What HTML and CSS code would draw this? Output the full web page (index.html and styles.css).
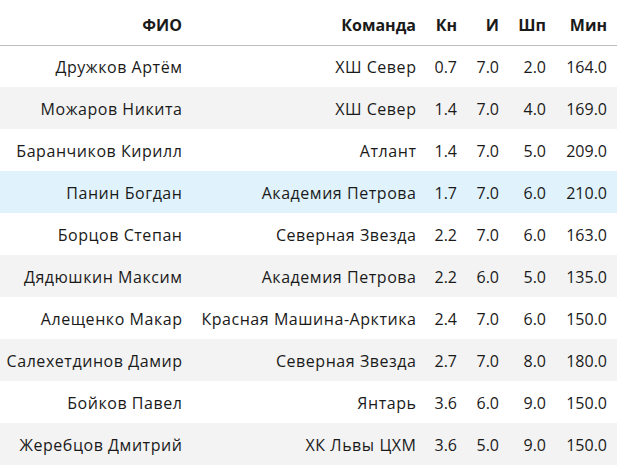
FILE: index.html
```html
<!DOCTYPE html>
<html lang="ru">
<head>
<meta charset="utf-8">
<title>Таблица</title>
<link rel="stylesheet" href="styles.css">
</head>
<body>
<table class="data">
  <colgroup>
    <col class="c-name">
    <col class="c-team">
    <col class="c-kn">
    <col class="c-i">
    <col class="c-shp">
    <col class="c-min">
  </colgroup>
  <thead>
    <tr><th>ФИО</th><th>Команда</th><th>Кн</th><th>И</th><th>Шп</th><th>Мин</th></tr>
  </thead>
  <tbody>
    <tr><td class="txt">Дружков Артём</td><td class="txt">ХШ Север</td><td>0.7</td><td>7.0</td><td>2.0</td><td>164.0</td></tr>
    <tr><td class="txt">Можаров Никита</td><td class="txt">ХШ Север</td><td>1.4</td><td>7.0</td><td>4.0</td><td>169.0</td></tr>
    <tr><td class="txt">Баранчиков Кирилл</td><td class="txt">Атлант</td><td>1.4</td><td>7.0</td><td>5.0</td><td>209.0</td></tr>
    <tr class="hover"><td class="txt">Панин Богдан</td><td class="txt">Академия Петрова</td><td>1.7</td><td>7.0</td><td>6.0</td><td>210.0</td></tr>
    <tr><td class="txt">Борцов Степан</td><td class="txt">Северная Звезда</td><td>2.2</td><td>7.0</td><td>6.0</td><td>163.0</td></tr>
    <tr><td class="txt">Дядюшкин Максим</td><td class="txt">Академия Петрова</td><td>2.2</td><td>6.0</td><td>5.0</td><td>135.0</td></tr>
    <tr><td class="txt">Алещенко Макар</td><td class="txt">Красная Машина-Арктика</td><td>2.4</td><td>7.0</td><td>6.0</td><td>150.0</td></tr>
    <tr><td class="txt">Салехетдинов Дамир</td><td class="txt">Северная Звезда</td><td>2.7</td><td>7.0</td><td>8.0</td><td>180.0</td></tr>
    <tr><td class="txt">Бойков Павел</td><td class="txt">Янтарь</td><td>3.6</td><td>6.0</td><td>9.0</td><td>150.0</td></tr>
    <tr><td class="txt">Жеребцов Дмитрий</td><td class="txt">ХК Львы ЦХМ</td><td>3.6</td><td>5.0</td><td>9.0</td><td>150.0</td></tr>
  </tbody>
</table>
</body>
</html>
```
FILE: styles.css
```css
html, body {
  margin: 0;
  padding: 0;
  background: #ffffff;
}

body {
  font-family: "Open Sans", "Liberation Sans", sans-serif;
  font-size: 16px;
  color: #1a1a1a;
}

.data {
  border-collapse: collapse;
  table-layout: fixed;
  width: 617px;
}

.c-name { width: 192px; }
.c-team { width: 234px; }
.c-kn { width: 41px; }
.c-i { width: 42px; }
.c-shp { width: 47px; }
.c-min { width: 61px; }

.data th,
.data td {
  text-align: right;
  padding: 0 10px 0 0;
  white-space: nowrap;
  overflow: visible;
}

.data th {
  font-weight: 700;
  height: 45px;
  vertical-align: middle;
  padding-top: 5px;
  box-sizing: border-box;
  border-bottom: 1px solid #bdbdbd;
}

.data td {
  height: 42px;
  vertical-align: middle;
  padding-top: 2px;
  box-sizing: border-box;
}

.data td.txt {
  letter-spacing: 0.55px;
  padding-right: 9.5px;
}

.data tbody tr:nth-child(even) {
  background: #f3f3f3;
}

.data tbody tr.hover {
  background: #e0f3fc;
}
```
